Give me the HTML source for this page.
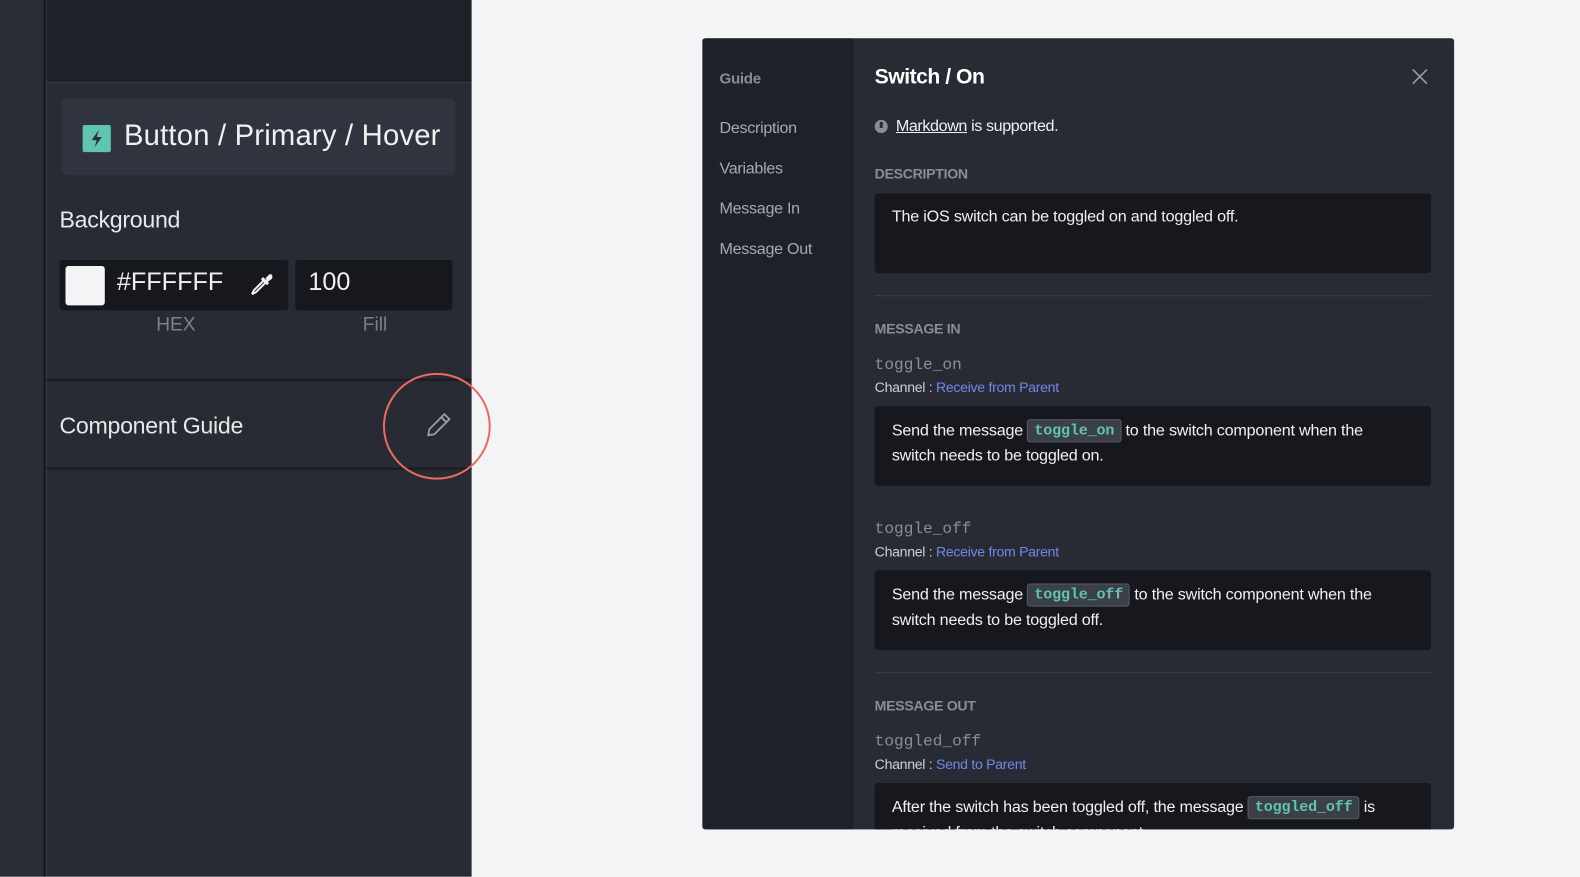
<!DOCTYPE html>
<html><head><meta charset="utf-8"><style>
*{box-sizing:border-box;margin:0;padding:0}
body{width:1580px;height:870px;background:#f3f4f6;font-family:"Liberation Sans",sans-serif;position:relative;overflow:hidden}
#w{position:absolute;left:0;top:0;width:1580px;height:870px;transform:scale(1.0077);transform-origin:0 0}
.abs{position:absolute}
.code{display:inline-block;background:#3a3f48;border:1px solid #555b66;border-radius:3px;color:#5fc4b0;font-family:"Liberation Mono",monospace;font-size:15px;font-weight:bold;padding:1px 6px;line-height:19px;vertical-align:1px}
.box{position:absolute;left:868px;width:552px;background:#16181d;border-radius:3px;color:#f0f0f0;font-size:16px;letter-spacing:-0.2px;padding:12px 50px 12px 17px;line-height:25px}
.h{position:absolute;left:868px;color:#8a8d94;font-size:14px;font-weight:bold;letter-spacing:-0.3px}
.nm{position:absolute;left:868px;color:#8a8d94;font-size:16px;font-family:"Liberation Mono",monospace}
.ch{position:absolute;left:868px;color:#d0d0d0;font-size:14px;letter-spacing:-0.3px}
.ch span{color:#6f88e8}
.side{position:absolute;left:714px;color:#a6a9b0;font-size:16px;letter-spacing:-0.3px}
.hr{position:absolute;left:868px;width:552px;height:1px;background:#3a3e48}
</style></head><body><div id="w">
<div class="abs" style="left:0;top:0;width:44px;height:870px;background:#2a2d35"></div>
<div class="abs" style="left:43px;top:0;width:3px;height:870px;background:#1a1c21"></div>
<div class="abs" style="left:46px;top:0;width:422px;height:82px;background:#1f2129"></div>
<div class="abs" style="left:46px;top:82px;width:422px;height:788px;background:#282b34"></div>
<div class="abs" style="left:61px;top:98px;width:391px;height:76px;background:#30343e;border-radius:6px"></div>
<div class="abs" style="left:82px;top:124px;width:28px;height:27px;background:#5fc4b0;border-radius:2px"></div>
<svg class="abs" style="left:82px;top:124px" width="28" height="27"><path d="M16 5 L9 15 L14 15 L12 22 L19 12 L14 12 Z" fill="#2a2d35"/></svg>
<div class="abs" style="left:123px;top:119px;color:#f0f0f0;font-size:29px;letter-spacing:0.2px">Button / Primary / Hover</div>
<div class="abs" style="left:59px;top:205px;color:#e8e8e8;font-size:23px;letter-spacing:-0.3px">Background</div>
<div class="abs" style="left:59px;top:258px;width:227px;height:50px;background:#16181d;border-radius:3px"></div>
<div class="abs" style="left:65px;top:264px;width:39px;height:39px;background:#f3f4f6;border-radius:3px"></div>
<div class="abs" style="left:116px;top:266px;color:#f0f0f0;font-size:25px">#FFFFFF</div>
<svg class="abs" style="left:246px;top:268px" width="28" height="28" fill="none" stroke="#f0f0f0" stroke-width="2"><path d="M4 24 L6 20 L16 10 M18 12 L8 22 L4 24"/><path d="M14 8 L20 14" stroke-width="3"/><path d="M18 9 L22 5 Q24 5 23 8 L19 11" fill="#f0f0f0"/></svg>
<div class="abs" style="left:293px;top:258px;width:156px;height:50px;background:#16181d;border-radius:3px"></div>
<div class="abs" style="left:306px;top:266px;color:#f0f0f0;font-size:25px">100</div>
<div class="abs" style="left:155px;top:312px;color:#7d8088;font-size:19px">HEX</div>
<div class="abs" style="left:360px;top:312px;color:#7d8088;font-size:19px">Fill</div>
<div class="abs" style="left:46px;top:376px;width:422px;height:2px;background:#1a1c21"></div>
<div class="abs" style="left:59px;top:409px;color:#e8e8e8;font-size:23px;letter-spacing:-0.3px">Component Guide</div>
<div class="abs" style="left:46px;top:464px;width:422px;height:2px;background:#1a1c21"></div>
<svg class="abs" style="left:420px;top:406px" width="30" height="30" fill="none" stroke="#9a9da4" stroke-width="1.8"><path d="M5 26 L6 20 L21 5 L26 10 L11 25 Z M18 8 L23 13"/></svg>
<div class="abs" style="left:380px;top:370px;width:107px;height:106px;border:2px solid #ec6a64;border-radius:50%"></div>

<div class="abs" style="left:697px;top:38px;width:746px;height:785px;background:#282b34;border-radius:3px;overflow:hidden">
<div class="abs" style="left:0;top:0;width:150px;height:785px;background:#1f2129"></div>
</div>
<div class="side" style="top:70px;font-weight:bold;font-size:15px;color:#8a8d94">Guide</div>
<div class="side" style="top:119px">Description</div>
<div class="side" style="top:159px">Variables</div>
<div class="side" style="top:199px">Message In</div>
<div class="side" style="top:239px">Message Out</div>
<div class="abs" style="left:868px;top:65px;color:#fff;font-size:21px;font-weight:bold;letter-spacing:-0.5px">Switch / On</div>
<svg class="abs" style="left:1400px;top:67px" width="18" height="18" stroke="#9a9da4" stroke-width="1.6"><path d="M2 2 L16 16 M16 2 L2 16"/></svg>
<div class="abs" style="left:868px;top:119px;width:13px;height:13px;border-radius:50%;background:#8a8d94"></div>
<div class="abs" style="left:873px;top:121px;width:3px;height:6px;background:#282b34"></div>
<div class="abs" style="left:889px;top:117px;color:#f0f0f0;font-size:16px;letter-spacing:-0.4px"><u>Markdown</u> is supported.</div>
<div class="h" style="top:164px">DESCRIPTION</div>
<div class="box" style="top:192px;height:79px;padding-top:11px">The iOS switch can be toggled on and toggled off.</div>
<div class="hr" style="top:293px"></div>
<div class="h" style="top:318px">MESSAGE IN</div>
<div class="nm" style="top:353px">toggle_on</div>
<div class="ch" style="top:376px">Channel : <span>Receive from Parent</span></div>
<div class="box" style="top:403px;height:79px">Send the message <span class="code">toggle_on</span> to the switch component when the switch needs to be toggled on.</div>
<div class="nm" style="top:516px">toggle_off</div>
<div class="ch" style="top:539px">Channel : <span>Receive from Parent</span></div>
<div class="box" style="top:566px;height:79px">Send the message <span class="code">toggle_off</span> to the switch component when the switch needs to be toggled off.</div>
<div class="hr" style="top:667px"></div>
<div class="h" style="top:692px">MESSAGE OUT</div>
<div class="nm" style="top:727px">toggled_off</div>
<div class="ch" style="top:750px">Channel : <span>Send to Parent</span></div>
<div class="abs" style="left:697px;top:777px;width:746px;height:46px;overflow:hidden">
<div class="box" style="left:171px;top:0;height:79px">After the switch has been toggled off, the message <span class="code">toggled_off</span> is received from the switch component.</div>
</div>
</div></body></html>
